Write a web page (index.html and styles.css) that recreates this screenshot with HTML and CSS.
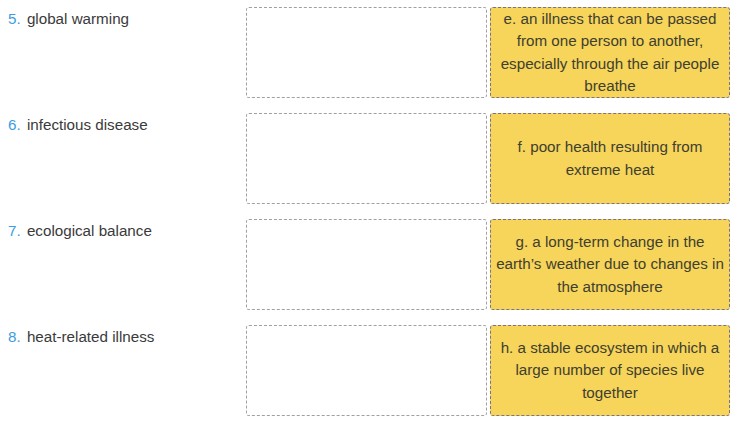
FILE: index.html
```html
<!DOCTYPE html>
<html lang="en">
<head>
    <meta charset="UTF-8">
    <title>Matching</title>
    <link rel="stylesheet" href="styles.css">
</head>
<body>
    <div class="match-list">
        <div class="match-row">
            <div class="term"><span class="num">5.</span> global warming</div>
            <div class="drop-box"></div>
            <div class="answer">e. an illness that can be passed from one person to another, especially through the air people breathe</div>
        </div>
        <div class="match-row">
            <div class="term"><span class="num">6.</span> infectious disease</div>
            <div class="drop-box"></div>
            <div class="answer">f. poor health resulting from extreme heat</div>
        </div>
        <div class="match-row">
            <div class="term"><span class="num">7.</span> ecological balance</div>
            <div class="drop-box"></div>
            <div class="answer">g. a long-term change in the earth’s weather due to changes in the atmosphere</div>
        </div>
        <div class="match-row">
            <div class="term"><span class="num">8.</span> heat-related illness</div>
            <div class="drop-box"></div>
            <div class="answer">h. a stable ecosystem in which a large number of species live together</div>
        </div>
    </div>
</body>
</html>
```

FILE: styles.css
```css
body {
    font-family: "Liberation Sans", Arial, sans-serif;
    margin: 0;
    padding: 7px 8px 0 8px;
    color: #333;
    background: #fff;
}
.match-list {
    display: flex;
    flex-direction: column;
    gap: 15px;
}
.match-row {
    display: grid;
    grid-template-columns: 238px 241px 243px;
    height: 91px;
}
.term {
    font-size: 15.2px;
    padding-top: 3px;
    color: #3a3a3a;
}
.num {
    color: #3d9de0;
    margin-right: 2px;
}
.drop-box {
    border: 1px dashed #a0a0a0;
    border-radius: 3px;
    background: #fff;
}
.answer {
    display: flex;
    align-items: center;
    justify-content: center;
    text-align: center;
    margin-left: 3px;
    background: #f7d45a;
    border: 1px dashed #7c7288;
    border-radius: 3px;
    font-size: 15.2px;
    line-height: 22.3px;
    color: #404030;
    padding: 0 3px;
}
```
